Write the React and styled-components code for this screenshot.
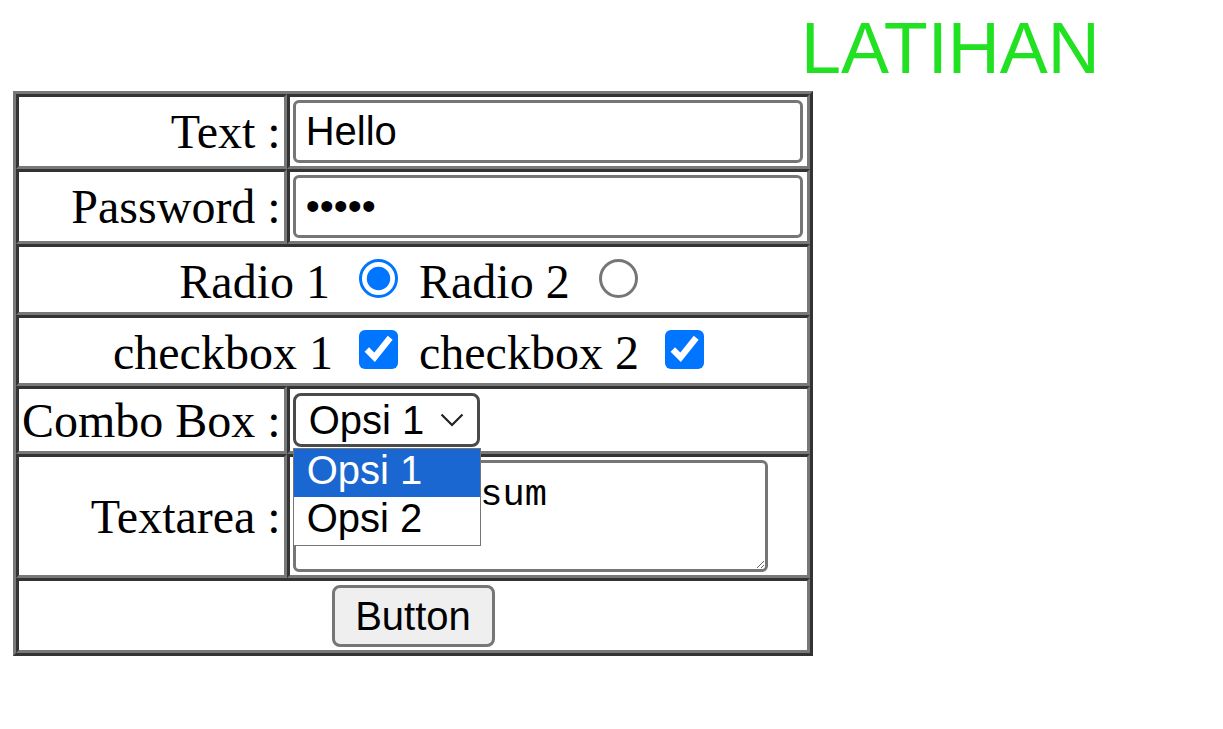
import React from 'react';
import styled, { createGlobalStyle } from 'styled-components';

const GlobalStyle = createGlobalStyle`
  html, body {
    margin: 0;
    padding: 0;
    background: #ffffff;
  }
  body {
    font-family: 'Liberation Serif', 'Times New Roman', serif;
    font-size: 48px;
    color: #000000;
  }
`;

const sans = `'Liberation Sans', Arial, sans-serif`;

const Page = styled.div`
  padding: 8px 0 0 13px;
`;

const Title = styled.h1`
  margin: 0 0 2px 0;
  padding-left: 788px;
  font-family: ${sans};
  font-weight: normal;
  font-size: 72px;
  line-height: 81px;
  color: #22e022;
`;

const FormTable = styled.table`
  width: 800px;
  border-collapse: separate;
  border-spacing: 0;
  border: 3px solid;
  border-color: #787878 #333333 #333333 #787878;
  font-family: 'Liberation Serif', 'Times New Roman', serif;
  font-size: 48px;
`;

const Cell = styled.td`
  padding: 3px;
  border: 3px solid;
  border-color: #333333 #787878 #787878 #333333;
  vertical-align: middle;
  text-align: ${p => p.$align || 'left'};
  ${p => p.$shrink && 'width: 1px; white-space: nowrap;'}
`;

const TextInput = styled.input`
  display: block;
  box-sizing: border-box;
  width: 510px;
  height: 63px;
  margin: 0;
  padding: 0 10px;
  border: 3px solid #767676;
  border-radius: 6px;
  background: #ffffff;
  font-family: ${sans};
  font-size: 40px;
  color: #000000;
  outline: none;
`;

const Choice = styled.input`
  zoom: 3;
  margin: 3px 3px 0 ${p => (p.type === 'checkbox' ? '4.7px' : '5.67px')};
  vertical-align: baseline;
`;

const SelectWrap = styled.div`
  position: relative;
  width: 187px;
  margin: 1px 0;
`;

const SelectBox = styled.div`
  box-sizing: border-box;
  height: 54px;
  display: flex;
  align-items: center;
  justify-content: space-between;
  padding: 0 13px 0 13px;
  border: 3px solid #4a4a4a;
  border-radius: 8px;
  background: #ffffff;
  font-family: ${sans};
  font-size: 40px;
  color: #000000;
`;

const Dropdown = styled.ul`
  position: absolute;
  left: 0;
  top: calc(100% + 1px);
  z-index: 2;
  box-sizing: border-box;
  width: 188px;
  margin: 0;
  padding: 0;
  list-style: none;
  border: 1px solid #767676;
  background: #ffffff;
`;

const Option = styled.li`
  height: 48px;
  line-height: 42px;
  padding-left: 13px;
  font-family: ${sans};
  font-size: 40px;
  background: ${p => (p.$active ? '#1a67d2' : '#ffffff')};
  color: ${p => (p.$active ? '#ffffff' : '#000000')};
`;

const TextArea = styled.textarea`
  display: block;
  box-sizing: border-box;
  width: 475px;
  height: 112px;
  margin: 0;
  padding: 11px 7px;
  border: 3px solid #767676;
  border-radius: 6px;
  font-family: 'Liberation Mono', 'Courier New', monospace;
  font-size: 37px;
  color: #000000;
  outline: none;
`;

const SubmitButton = styled.button`
  display: block;
  box-sizing: border-box;
  width: 163px;
  height: 62px;
  margin: 1px auto 0;
  padding: 0;
  border: 3px solid #767676;
  border-radius: 8px;
  background: #efefef;
  font-family: ${sans};
  font-size: 40px;
  color: #000000;
`;

const Chevron = () => (
  <svg width="24" height="14" viewBox="0 0 24 14">
    <path d="M1.5 1.5 L12 12 L22.5 1.5" fill="none" stroke="#222" strokeWidth="2.2" />
  </svg>
);

export default function App() {
  return (
    <>
      <GlobalStyle />
      <Page>
        <Title>LATIHAN</Title>
        <FormTable>
          <tbody>
            <tr>
              <Cell $align="right" $shrink>Text :</Cell>
              <Cell>
                <TextInput type="text" defaultValue="Hello" />
              </Cell>
            </tr>
            <tr>
              <Cell $align="right" $shrink>Password :</Cell>
              <Cell>
                <TextInput type="password" defaultValue="Hello" />
              </Cell>
            </tr>
            <tr>
              <Cell colSpan={2} $align="center">
                {'Radio 1 '}
                <Choice type="radio" name="radio" defaultChecked />
                {' Radio 2 '}
                <Choice type="radio" name="radio" />
              </Cell>
            </tr>
            <tr>
              <Cell colSpan={2} $align="center">
                {'checkbox 1 '}
                <Choice type="checkbox" defaultChecked />
                {' checkbox 2 '}
                <Choice type="checkbox" defaultChecked />
              </Cell>
            </tr>
            <tr>
              <Cell $align="right" $shrink>Combo Box :</Cell>
              <Cell>
                <SelectWrap>
                  <SelectBox>
                    <span>Opsi 1</span>
                    <Chevron />
                  </SelectBox>
                  <Dropdown>
                    <Option $active>Opsi 1</Option>
                    <Option>Opsi 2</Option>
                  </Dropdown>
                </SelectWrap>
              </Cell>
            </tr>
            <tr>
              <Cell $align="right" $shrink>Textarea :</Cell>
              <Cell>
                <TextArea defaultValue="Lorem ipsum" />
              </Cell>
            </tr>
            <tr>
              <Cell colSpan={2} $align="center">
                <SubmitButton type="button">Button</SubmitButton>
              </Cell>
            </tr>
          </tbody>
        </FormTable>
      </Page>
    </>
  );
}
